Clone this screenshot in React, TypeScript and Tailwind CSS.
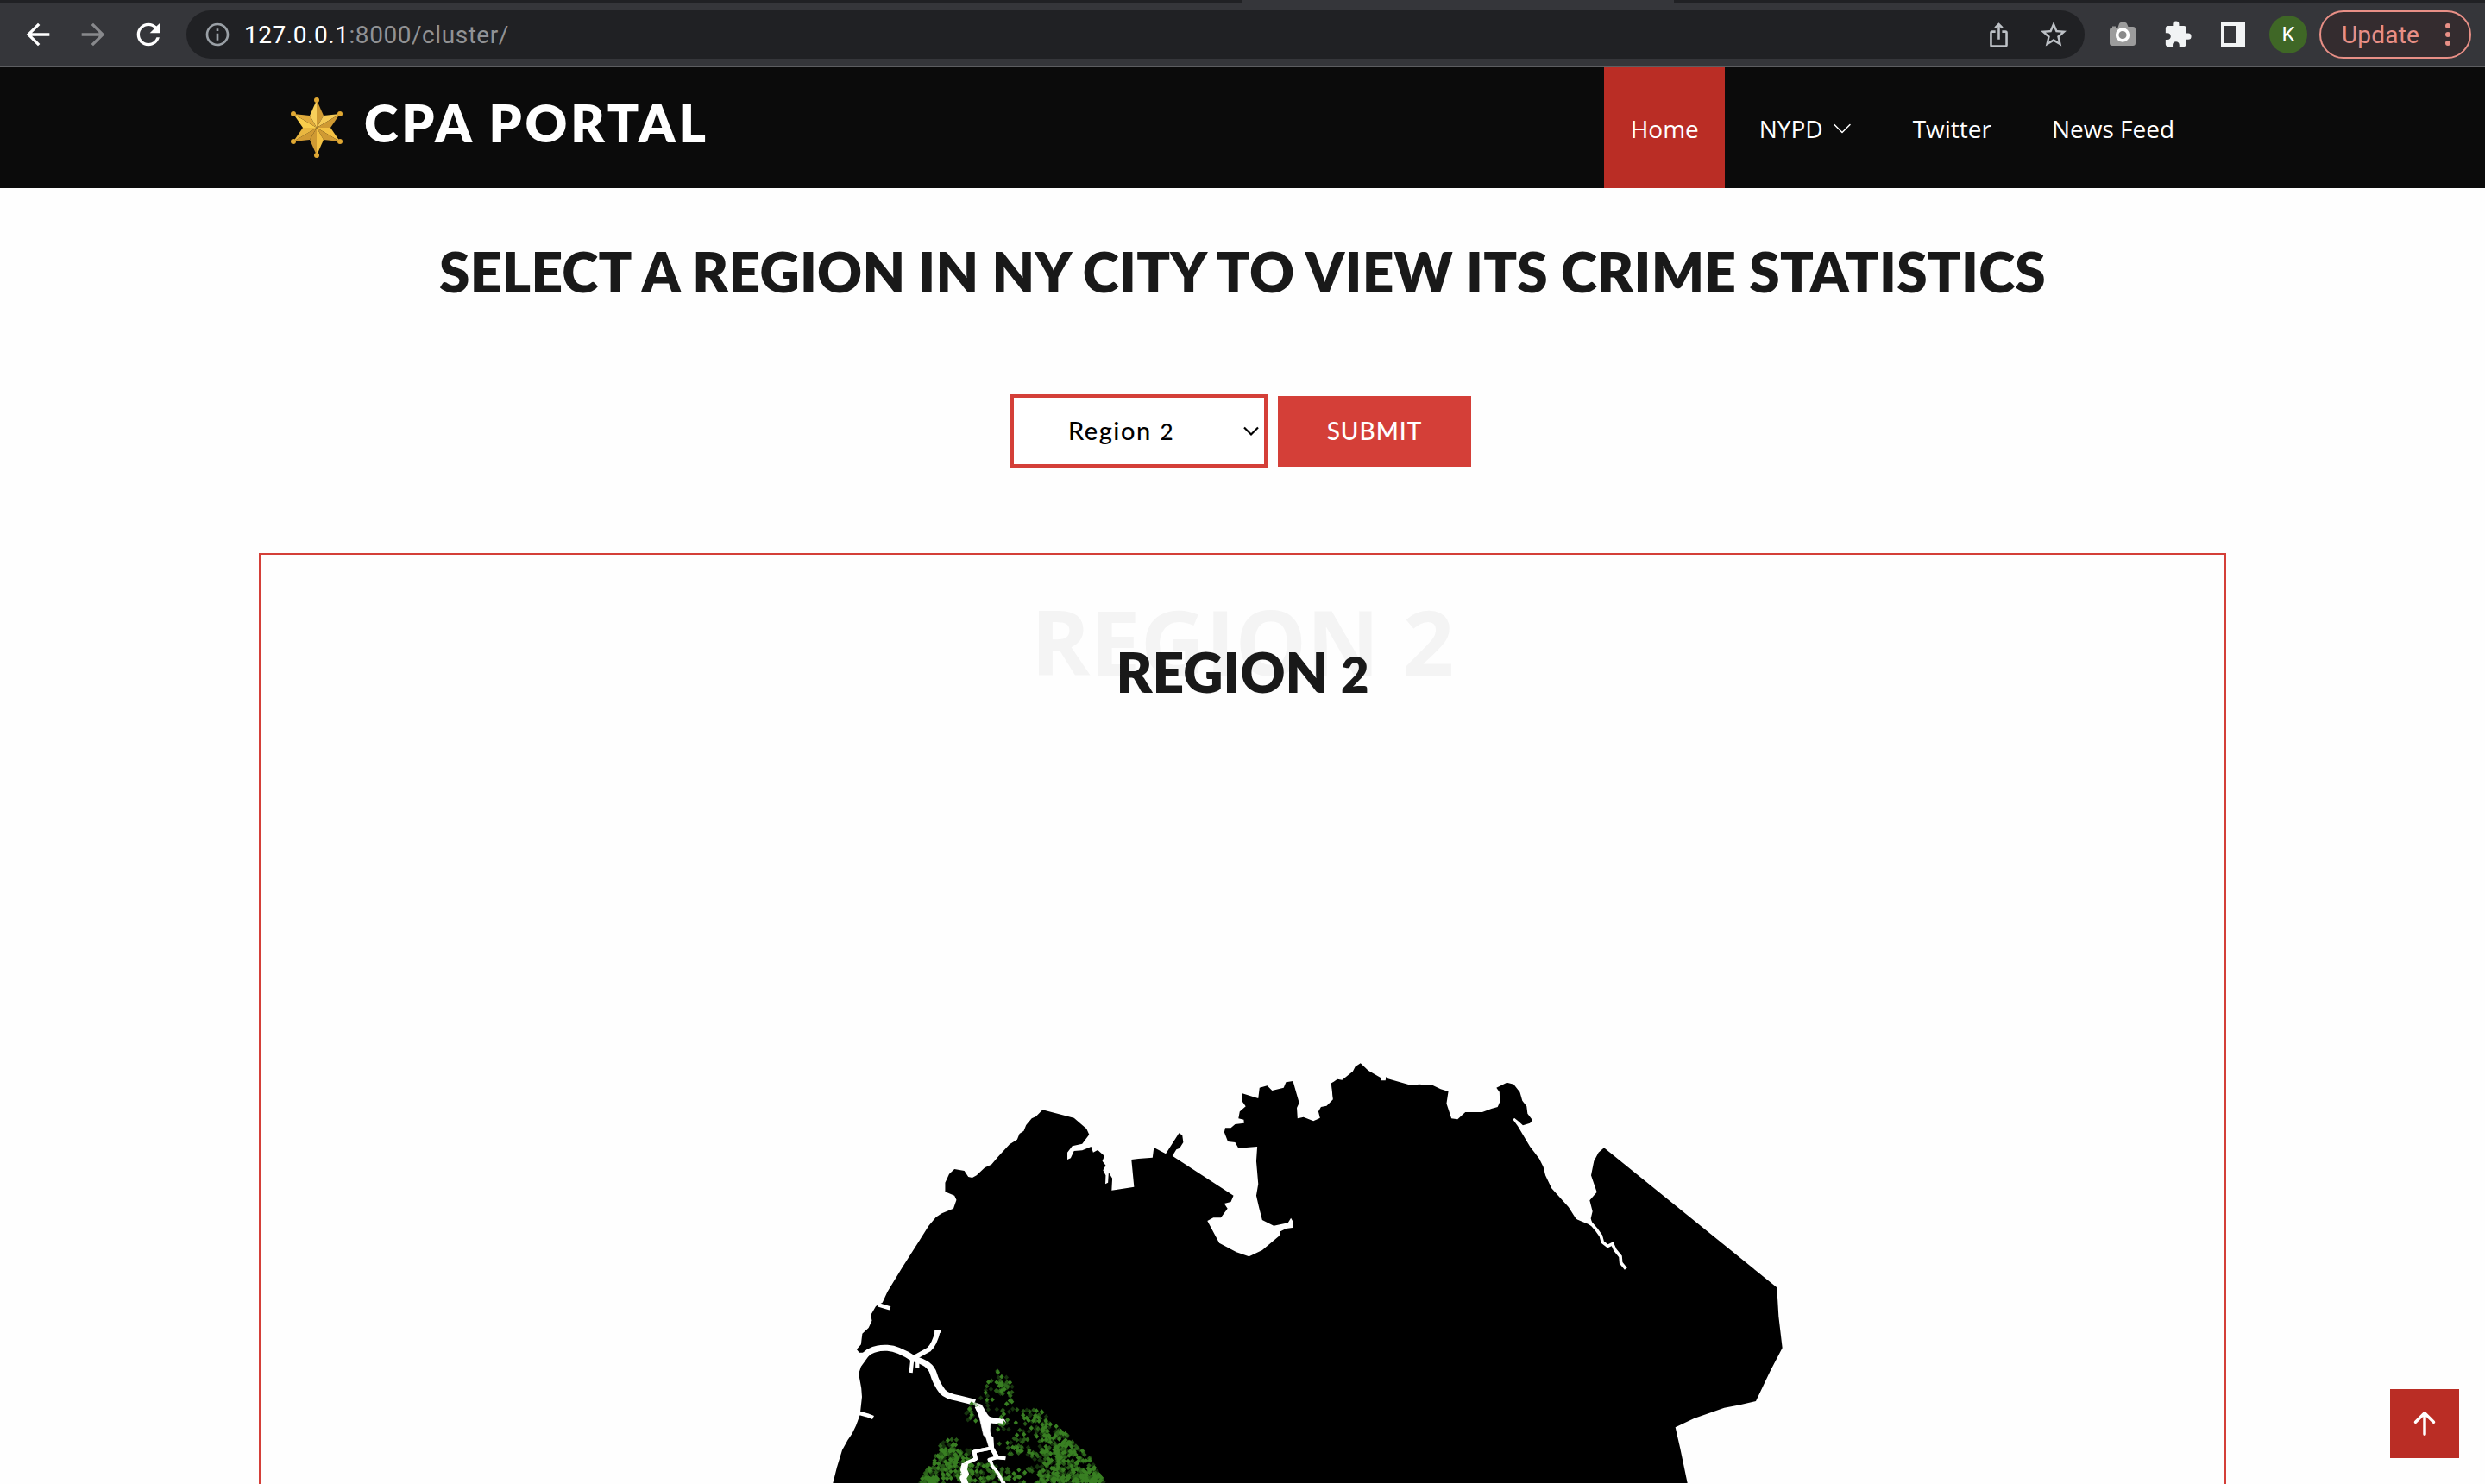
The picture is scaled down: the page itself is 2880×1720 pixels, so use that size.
import { MdArrowBack, MdArrowForward, MdRefresh, MdInfoOutline, MdStarBorder, MdExtension, MdIosShare } from 'react-icons/md';
import { BsArrowUpShort, BsChevronDown } from 'react-icons/bs';

function CameraIcon() {
  return (
    <svg width="30" height="28" viewBox="0 0 30 28">
      <path d="M3 6V4.500h4V6h2.500l1.500-4.500Q11.500 0 13 0h5q1.500 0 2 1.500L21.500 5H27q3 0 3 3v16q0 3-3 3H3q-3 0-3-3V9q0-3 3-3z" fill="#9c9c9c" />
      <circle cx="15" cy="14.500" r="6.400" fill="#8b8b8b" stroke="#fff" strokeWidth="3.600" />
    </svg>
  );
}

function BrowserBar() {
  return (
    <div className="flex h-[78px] flex-col border-b-2 border-[#5d5e61] bg-[#35363a]">
      <div className="flex h-1 bg-[#202124]">
        <div className="ml-[1440px] h-1 w-[500px] bg-[#35363a]" />
      </div>
      <div className="flex h-[72px] items-center pl-3 pr-4 font-['Roboto',sans-serif] text-[28px]">
        <div className="flex w-16 justify-center text-white"><MdArrowBack size={40} /></div>
        <div className="flex w-16 justify-center text-[#88898c]"><MdArrowForward size={40} /></div>
        <div className="flex w-16 justify-center text-white"><MdRefresh size={40} /></div>
        <div className="ml-3 flex h-14 w-[2200px] items-center rounded-full bg-[#202124] pl-5 pr-1">
          <MdInfoOutline size={32} className="text-[#9aa0a6]" />
          <div className="ml-[15px] flex-1 pt-px tracking-[0.55px]">
            <span className="text-white">127.0.0.1</span>
            <span className="text-[#919294]">:8000/cluster/</span>
          </div>
          <div className="flex w-16 justify-center text-[#bdc1c6]"><MdIosShare size={31} /></div>
          <div className="flex w-16 justify-center text-[#bdc1c6]"><MdStarBorder size={36} /></div>
        </div>
        <div className="ml-3 flex w-16 justify-center"><CameraIcon /></div>
        <div className="flex w-16 justify-center text-[#f1f3f4]"><MdExtension size={34} /></div>
        <div className="flex w-16 justify-center">
          <div className="h-7 w-7 border-4 border-r-[10px] border-[#f1f3f4]" />
        </div>
        <div className="flex w-16 justify-center">
          <div className="flex h-11 w-11 items-center justify-center rounded-full bg-[#3f6726] text-2xl text-white">K</div>
        </div>
        <div className="ml-1 flex h-14 w-44 items-center justify-between rounded-full border-2 border-[#e88f86] bg-[#342c2f] pl-6 pr-[22px] text-[#e88f86]">
          <span className="pt-px tracking-[0.2px]">Update</span>
          <div className="flex flex-col gap-1">
            <i className="h-1.5 w-1.5 rounded-full bg-[#e88f86]" />
            <i className="h-1.5 w-1.5 rounded-full bg-[#e88f86]" />
            <i className="h-1.5 w-1.5 rounded-full bg-[#e88f86]" />
          </div>
        </div>
      </div>
    </div>
  );
}

const STAR_TIPS = [[0, -32], [27, -16], [27, 16], [0, 32], [-27, 16], [-27, -16]];
const STAR_NOTCHES = [[8, -14], [16, 0], [8, 14], [-8, 14], [-16, 0], [-8, -14]];

function SheriffStar() {
  return (
    <svg width="64" height="72" viewBox="-32 -36 64 72">
      {STAR_TIPS.map(([x, y], i) => {
        const after = STAR_NOTCHES[i];
        const before = STAR_NOTCHES[(i + 5) % 6];
        const lower = i === 2 || i === 3;
        return (
          <g key={i}>
            <path d={`M0 0L${before[0]} ${before[1]}L${x} ${y}z`} fill={lower ? '#f3c143' : i === 1 ? '#f5cb57' : i === 5 ? '#f8cd4c' : i === 0 ? '#f8cf5a' : '#d09a33'} />
            <path d={`M0 0L${after[0]} ${after[1]}L${x} ${y}z`} fill={i === 5 ? '#e0ab3c' : i === 4 ? '#e9b740' : '#cf9a33'} />
          </g>
        );
      })}
      {STAR_TIPS.map(([x, y], i) => (
        <circle key={i} cx={x} cy={y} r="3" fill="#e0a833" />
      ))}
    </svg>
  );
}

function SiteHeader() {
  return (
    <header className="flex h-[140px] items-center justify-between bg-[#0b0b0b] pl-[335px] pr-[330px] text-white">
      <div className="flex h-full items-center">
        <SheriffStar />
        <span className="pb-[13px] pl-[23px] font-['Lato',sans-serif] text-[60px] font-extrabold leading-none tracking-[3.9px]">CPA PORTAL</span>
      </div>
      <nav className="flex h-full items-stretch font-['Open_Sans',sans-serif] text-[28px]">
        <a className="flex w-[140px] items-center justify-center bg-[#ba2d25] pl-px pt-0.5">Home</a>
        <a className="ml-10 flex items-center pt-0.5">NYPD<BsChevronDown size={24} className="ml-[10px]" /></a>
        <a className="ml-[70px] flex items-center pt-0.5">Twitter</a>
        <a className="ml-[70px] flex w-[172px] items-center pt-0.5">News Feed</a>
      </nav>
    </header>
  );
}

function RegionForm() {
  return (
    <form className="mt-[110px] flex h-[85px] items-center justify-center pr-1 font-['Lato',sans-serif] font-medium">
      <div className="flex h-[85px] w-[298px] items-center justify-between border-4 border-[#d43f38] bg-white pb-0.5 pl-[63px] pr-[6px] text-[29px] text-black">
        <span className="whitespace-nowrap tracking-[1.5px]">Region <span className="ml-px text-[26px]">2</span></span>
        <svg width="18" height="12" viewBox="0 0 18 12" className="mt-[3px]" fill="none" stroke="#000" strokeWidth="2.200">
          <path d="M1 1.500l8 8 8-8" />
        </svg>
      </div>
      <button type="button" className="ml-3 flex h-[82px] w-56 items-center justify-center bg-[#d43f38] pb-0.5 text-[28px] tracking-[1px] text-white">SUBMIT</button>
    </form>
  );
}

/* Area covered by incident markers and the clusters that fill it. */
const MARKER_AREA = [[535, 1098], [550, 1105], [582, 1138], [592, 1200], [622, 1212], [655, 1235], [700, 1275], [770, 1355], [820, 1412], [862, 1500], [300, 1500], [350, 1405], [375, 1345], [425, 1275], [470, 1195], [505, 1145]];
const CLUSTERS = [
  [541, 1112, 3, 3, 3], [541, 1155, 40, 25, 28], [578, 1185, 12, 35, 10], [520, 1205, 35, 40, 16], [455, 1245, 25, 45, 20], [600, 1265, 60, 50, 20],
  [655, 1300, 40, 55, 55], [720, 1345, 50, 60, 120], [770, 1425, 60, 70, 190], [815, 1475, 50, 30, 100], [680, 1445, 50, 60, 120],
  [630, 1385, 60, 20, 24], [380, 1395, 35, 50, 80], [335, 1480, 40, 35, 180], [415, 1440, 45, 55, 100], [490, 1465, 45, 35, 70],
  [590, 1470, 45, 20, 30], [730, 1485, 140, 15, 110], [575, 1320, 40, 50, 16],
];
const GAPS = [[610, 1425, 42, 22], [640, 1482, 28, 18], [800, 1440, 14, 14], [365, 1480, 9, 20]];

function inside(x: number, y: number) {
  let hit = false;
  for (let i = 0, j = MARKER_AREA.length - 1; i < MARKER_AREA.length; j = i++) {
    const [xi, yi] = MARKER_AREA[i];
    const [xj, yj] = MARKER_AREA[j];
    if (yi > y !== yj > y && x < ((xj - xi) * (y - yi)) / (yj - yi) + xi) hit = !hit;
  }
  return hit && !GAPS.some(([gx, gy, rx, ry]) => ((x - gx) / rx) ** 2 + ((y - gy) / ry) ** 2 < 1);
}

function buildMarkers() {
  let seed = 41;
  const rnd = () => {
    seed = (seed * 1664525 + 1013904223) % 4294967296;
    return seed / 4294967296;
  };
  const out = ['', '', ''];
  CLUSTERS.forEach(([cx, cy, rx, ry, n]) => {
    for (let k = 0; k < n; k++) {
      const x = cx + (rnd() * 2 - 1) * rx;
      const y = cy + (rnd() * 2 - 1) * ry;
      const tone = Math.floor(rnd() * 3);
      if (inside(x, y)) out[tone] += `M${(x - 7).toFixed(1)} ${y.toFixed(1)}l7-8.500 7 8.500-7 8.500z`;
    }
  });
  return out;
}
const MARKERS = buildMarkers();

const WEST = '20,1580 40,1500 52,1445 68,1385 85,1350 98,1328 110,1300 122,1262 128,1200 126,1170 118,1120 125,1095 150,1055 132,1046 120,1046 112,1035 125,1018 129,980 148,960 158,935 155,915 170,885 190,872 205,835 250,750 300,660 330,605 352,575 370,562 405,545 414,515 408,500 380,487 380,455 392,425 408,408 438,414 450,435 462,438 475,430 500,403 520,392 540,365 575,322 598,305 605,285 618,275 625,255 642,232 655,225 675,202 770,230 808,268 816,288 795,320 765,328 750,350 750,375 760,370 770,345 795,343 822,330 828,350 842,342 862,362 856,380 866,395 858,412 866,430 865,460 873,455 875,420 886,440 884,482 910,478 952,470 944,375 965,372 1008,368 1012,333 1048,355 1088,283 1098,290 1101,315 1090,335 1080,340 1068,362 1253,500 1245,522 1225,528 1235,545 1215,577 1192,577 1174,588 1210,665 1262,697 1300,712 1340,690 1392,640 1395,625 1412,615 1432,612 1433,590 1427,578 1418,595 1375,605 1340,585 1330,540 1322,500 1328,460 1322,380 1325,330 1268,335 1258,315 1236,312 1225,280 1228,265 1245,265 1258,252 1285,248 1284,236 1268,232 1272,208 1290,190 1278,170 1280,145 1328,162 1332,125 1355,118 1370,135 1405,125 1412,106 1433,102 1452,178 1445,195 1447,232 1465,227 1495,241 1515,230 1510,208 1518,192 1535,188 1555,165 1550,108 1600,96 1600,1580';
const NORTH = '540,170 560,155 575,158 610,128 618,112 635,100 660,125 700,150 702,160 716,160 718,147 724,154 800,177 825,173 870,177 895,190 920,198 914,240 930,292 950,295 975,270 1030,270 1060,258 1080,252 1087,235 1086,200 1076,185 1110,167 1132,173 1152,200 1160,230 1174,250 1177,275 1193,298 1185,308 1162,316 1148,302 1134,290 1130,296 1145,318 1160,345 1185,390 1215,432 1228,460 1235,490 1255,535 1310,600 1335,642 1375,660 1500,850 1500,960 530,960 546,230';
const EAST = '230,582 254,597 272,600 290,610 281,580 287,555 277,517 302,488 282,430 292,380 308,350 327,334 928,820 934,920 947,1030 905,1110 855,1215 800,1228 745,1238 640,1275 575,1306 592,1380 617,1500 630,1580 -650,1580 -650,700';

function RegionMap() {
  return (
    <svg width="1300" height="500" viewBox="790 1220 1300 500" className="mx-auto block shrink-0">
      <g transform="translate(950 1220) scale(.38272 .33333)">
        <polygon points={WEST} />
      </g>
      <g transform="translate(1350 1200) scale(.35714 .33333)">
        <polygon points={NORTH} />
      </g>
      <g transform="translate(1750 1220) scale(.33333)">
        <polygon points={EAST} />
        <polyline points="278,592 300,618 316,640 322,662 340,676 356,668 366,690 384,712 386,734 403,755" fill="none" stroke="#fff" strokeWidth="11" />
      </g>
      <g transform="translate(950 1220) scale(.38272 .33333)" fill="none" stroke="#fff" strokeLinejoin="round">
        <path d="M122 1068L150 1043Q172 1028 205 1030T285 1068Q335 1082 344 1118T372 1182Q385 1198 420 1205L470 1219" strokeWidth="21" />
        <path d="M283 1066L330 1036Q348 1018 358 968" strokeWidth="16" />
        <path d="M348 972h20M280 1072l-4 44M296 1080v20" strokeWidth="11" />
        <path d="M178 880l35 12M118 1256l26 8 18 8" strokeWidth="13" />
        <path d="M468 1220l22 8 22 42 16 4 30 4 6 12-6 8-40-8-4 34 10 20 2 35-12 2-10-38-8-10-12-60z" fill="#fff" strokeWidth="2" />
        <path d="M520 1340l2 40 15 30 26 4M538 1410l-24 8 8 22 20 30 16 32M520 1378l-52 12 4 26-32 16 4 22-12 12 8 14-4 22" strokeWidth="12" />
      </g>
      <g transform="translate(950 1220) scale(.38272 .33333)" fill="#387f22">
        <path d={MARKERS[0]} opacity=".4" />
        <path d={MARKERS[1]} opacity=".7" />
        <path d={MARKERS[2]} />
      </g>
      <g transform="translate(950 1220) scale(.38272 .33333)" fill="none" stroke="#fff" strokeLinejoin="round">
        <path d="M476 1234l20 44 12 30 4 34 10 38 15 30 22 2M492 1256l24 24 40 6" strokeWidth="14" />
        <path d="M520 1378l-52 12 4 26-32 16" strokeWidth="12" />
        <path d="M440 1432l-4 22 6 14-8 14 8 24" strokeWidth="20" />
        <path d="M536 1412l-20 6 6 20 20 30 14 32" strokeWidth="9" />
      </g>
    </svg>
  );
}

export default function App() {
  return (
    <div className="relative flex h-[1720px] w-[2880px] flex-col overflow-hidden bg-[#fefefe]">
      <BrowserBar />
      <SiteHeader />
      <main className="flex min-h-0 flex-1 flex-col">
        <h2 className="mt-[65px] whitespace-nowrap text-center font-['Lato',sans-serif] text-[64px] font-extrabold leading-[64px] tracking-[0.23px] text-[#191919]">
          SELECT A REGION IN NY CITY TO VIEW ITS CRIME STATISTICS
        </h2>
        <RegionForm />
        <section className="mx-[300px] mt-[99px] flex h-[1200px] shrink-0 flex-col border-2 border-[#d43f38]">
          <div className="relative h-[576px] shrink-0 text-center leading-none">
            <span className="absolute inset-x-0 top-[48px] font-['Open_Sans',sans-serif] text-[104px] font-bold text-[#f4f4f4]">REGION 2</span>
            <h3 className="relative pt-[104px] font-['Lato',sans-serif] text-[64px] font-extrabold text-[#191919]">
              REGION <span className="text-[56px] leading-none">2</span>
            </h3>
          </div>
          <RegionMap />
        </section>
      </main>
      <a className="absolute bottom-[30px] right-[30px] flex h-20 w-20 items-center justify-center bg-[#ba2d25] text-white">
        <BsArrowUpShort size={56} />
      </a>
    </div>
  );
}
